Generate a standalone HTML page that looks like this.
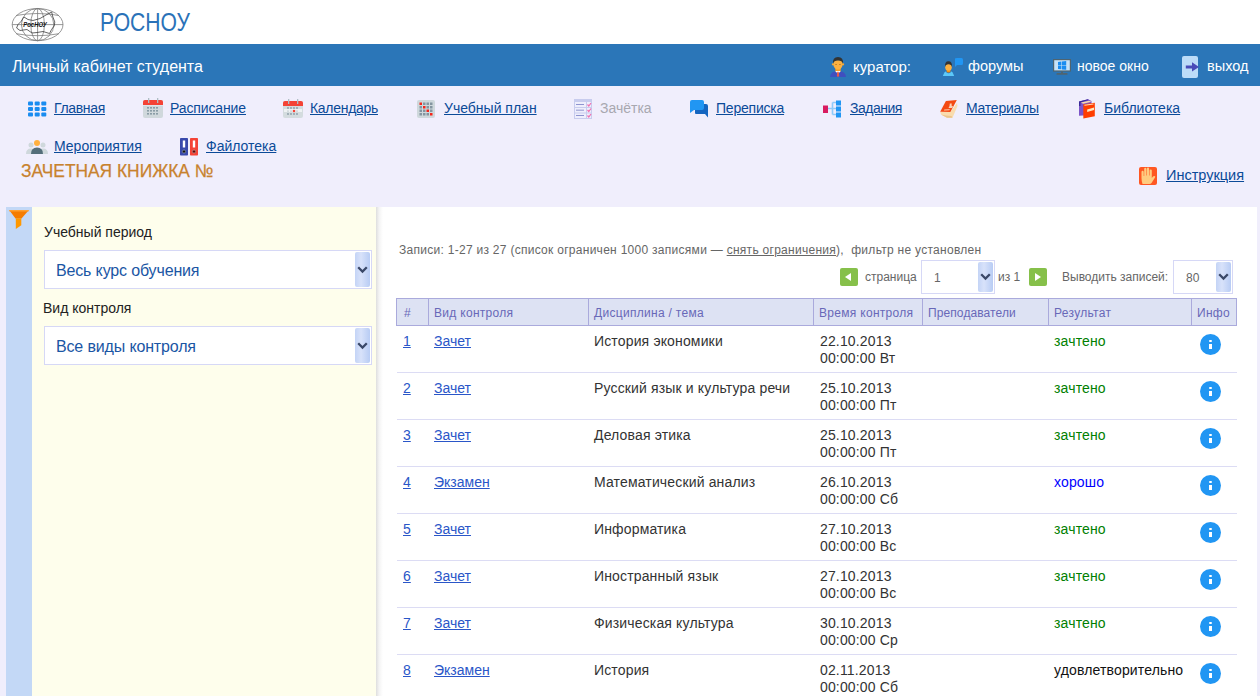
<!DOCTYPE html>
<html><head><meta charset="utf-8">
<style>
*{margin:0;padding:0;box-sizing:border-box}
html,body{width:1260px;height:696px;overflow:hidden;background:#fff;font-family:"Liberation Sans",sans-serif;position:relative}
.a{position:absolute;white-space:nowrap;line-height:1}
#top{position:absolute;left:0;top:0;width:1260px;height:44px;background:#fff}
#bar{position:absolute;left:0;top:44px;width:1260px;height:42px;background:#2b76b8}
#nav{position:absolute;left:0;top:86px;width:1260px;height:610px;background:#f0eefc}
.nl{color:#0b4a98;text-decoration:underline;font-size:14px}
.wt{color:#fff;font-size:15px}
svg{position:absolute;overflow:visible}
#strip{position:absolute;left:6px;top:207px;width:26px;height:489px;background:#c3d8f6}
#yel{position:absolute;left:32px;top:207px;width:344px;height:489px;background:#fefeec}
#shadow{position:absolute;left:376px;top:207px;width:7px;height:489px;background:linear-gradient(to right,#dedede,#f4f4f4 45%,#fff)}
#wp{position:absolute;left:383px;top:207px;width:874px;height:489px;background:#fff}
.lbl{font-size:14px;color:#222}
.sel{position:absolute;background:#fff;border:1px solid #d6d8f6}
.sbtn{position:absolute;border-radius:2px;background:linear-gradient(to right,#c4d4f6,#d8e2fa 40%,#b8ccf4)}
.chev{position:absolute;width:7px;height:7px;border-right:3px solid #3a4868;border-bottom:3px solid #3a4868;transform:rotate(45deg)}
.stx{font-size:16px;color:#1a56a4}
.gt{color:#666;font-size:12px}
.th{position:absolute;top:298px;left:396px;width:841px;height:28px;background:#dde2f3;border:1px solid #aaaadc}
.vl{position:absolute;top:298px;width:1px;height:28px;background:#aaaadc}
.thc{font-size:12px;color:#6868b8}
.td{font-size:14px;color:#333;letter-spacing:0.15px}
.lk{color:#2a56c8;text-decoration:underline;font-size:14px}
.sep{position:absolute;left:397px;width:840px;height:1px;background:#dcdcf4}
.info{position:absolute;width:21px;height:21px;border-radius:50%;background:#2196f3}
.info:before{content:"";position:absolute;left:9.3px;top:9.7px;width:2.5px;height:5.8px;background:#fff}
.info:after{content:"";position:absolute;left:9.3px;top:5.8px;width:2.5px;height:2.3px;border-radius:1px;background:#fff}
.gbtn{position:absolute;width:18px;height:18px;border-radius:2px;background:#86c04a}
</style></head><body>
<div id="top"></div>
<div id="bar"></div>
<div id="nav"></div>

<!-- logo -->
<svg style="left:10px;top:6px" width="56" height="38" viewBox="10 6 56 38">
 <g fill="none" stroke="#777" stroke-width="0.75">
  <ellipse cx="37.6" cy="24.6" rx="25.4" ry="16.1"/>
  <ellipse cx="37.6" cy="24.6" rx="16.2" ry="16.1"/>
  <ellipse cx="37.6" cy="24.6" rx="6.8" ry="16.1"/>
  <line x1="37.6" y1="8.5" x2="37.6" y2="40.7"/>
  <line x1="12.2" y1="24.6" x2="63" y2="24.6"/>
  <path d="M16 15.5 Q37.6 11.5 59 15.5 M16 33.7 Q37.6 37.7 59 33.7"/>
 </g>
 <path d="M16.6 28 L18 24.5 L21 21.5 L24 17 L28 19.5 L33 20.5 L40 18.5 L46 15 L51.7 12 L52.5 16 L54.8 22 L54.2 26 L51.5 29.5 L49.5 33.5 L43 31.5 L37 32.5 L32 33 L27 29.5 L20 30.5 Z" fill="none" stroke="#333" stroke-width="0.75"/>
 <text x="23.3" y="26.6" font-family="Liberation Sans" font-style="italic" font-weight="bold" font-size="6.6" textLength="23.5" lengthAdjust="spacingAndGlyphs" fill="#111">РосНОУ</text>
</svg>
<div class="a" style="left:100px;top:10px;font-size:25px;color:#2a72b8;transform:scaleX(0.845);transform-origin:0 0">РОСНОУ</div>

<!-- blue bar -->
<div class="a" style="left:12px;top:59px;font-size:16px;color:#fff">Личный кабинет студента</div>

<svg style="left:829px;top:57px" width="18" height="20" viewBox="0 0 18 20">
 <path d="M1 20 Q1.3 14 9 14 Q16.7 14 17 20 Z" fill="#3f4fbf"/>
 <rect x="6.3" y="10" width="5.4" height="4.5" fill="#f7a020"/>
 <path d="M6.3 14 L9 17 L11.7 14 Z" fill="#fff"/>
 <path d="M8.3 14.8 L9.7 14.8 L10.2 19 L9 20 L7.8 19 Z" fill="#e85a48"/>
 <circle cx="3.9" cy="7.3" r="1.1" fill="#f8a830"/><circle cx="14.1" cy="7.3" r="1.1" fill="#f8a830"/>
 <ellipse cx="9" cy="7.3" rx="4.7" ry="5.3" fill="#fcb040"/>
 <path d="M4 6.8 Q3.4 0 9 0 Q14.6 0 14 6.8 Q13.2 3.6 9 3.6 Q4.8 3.6 4 6.8 Z" fill="#333"/>
 <rect x="6.3" y="7.2" width="1.6" height="0.8" fill="#b07020"/><rect x="10.1" y="7.2" width="1.6" height="0.8" fill="#b07020"/>
</svg>
<div class="a wt" style="left:853px;top:59px">куратор:</div>

<svg style="left:942px;top:58px" width="22" height="19" viewBox="0 0 22 19">
 <path d="M0.8 18 L2.5 14.2 Q3.5 13.2 5 13.2 L8 13.2 Q9.5 13.2 10.5 14.2 L12.2 18 Z" fill="#5cc8f8"/>
 <path d="M4 12.5 L9 12.5 L8.5 14.5 Q6.5 16 4.5 14.5 Z" fill="#1565c0"/>
 <path d="M4.5 11 L8.5 11 L8.3 14 Q6.5 15 4.7 14 Z" fill="#f59010"/>
 <ellipse cx="6.5" cy="9.3" rx="3.3" ry="3.5" fill="#fcb040"/>
 <path d="M3 9 Q2.6 3.2 6.5 3.2 Q10.4 3.2 10 9 Q9.5 6.3 6.5 6.2 Q3.5 6.3 3 9 Z" fill="#333"/>
 <path d="M13 0.5 Q13 0 15 0 L19.5 0 Q21 0 21 2 L21 5.5 Q21 7 19.5 7 L15 7 L13 9 Z" fill="#2196f3"/>
</svg>
<div class="a wt" style="left:968px;top:59px;font-size:14.5px">форумы</div>

<svg style="left:1053px;top:59px" width="18" height="16" viewBox="0 0 18 16">
 <rect x="0" y="0" width="18" height="12.6" fill="#4f6470"/>
 <rect x="1.2" y="1.2" width="15.6" height="10.2" fill="#c6e2f8"/>
 <path d="M5 3 L8.4 2.6 L8.4 6.2 L5 6.2 Z M9 2.5 L13.2 2 L13.2 6.2 L9 6.2 Z M5 6.8 L8.4 6.8 L8.4 10.3 L5 9.9 Z M9 6.8 L13.2 6.8 L13.2 10.8 L9 10.4 Z" fill="#1a8cf0"/>
 <rect x="8" y="12.6" width="2" height="1.6" fill="#4f6470"/>
 <rect x="3.5" y="14" width="11" height="1.8" rx="0.5" fill="#4f6470"/>
</svg>
<div class="a wt" style="left:1077px;top:59px;font-size:14px">новое окно</div>

<svg style="left:1182px;top:56px" width="18" height="22" viewBox="0 0 18 22">
 <rect x="0" y="0" width="16" height="22" rx="2" fill="#bcdcf8"/>
 <path d="M3.8 9.6 L10 9.6 L10 6.2 L17 11 L10 15.6 L10 12.4 L3.8 12.4 Z" fill="#4a4cb8"/>
</svg>
<div class="a wt" style="left:1207px;top:59px;font-size:14.5px">выход</div>

<!-- nav row 1 -->
<svg style="left:28px;top:101px" width="19" height="16" viewBox="0 0 19 16">
 <g fill="#1a8cf0">
 <rect x="0" y="0.5" width="5" height="4" rx="1"/><rect x="6.7" y="0.5" width="5" height="4" rx="1"/><rect x="13.3" y="0.5" width="5" height="4" rx="1"/>
 <rect x="0" y="6" width="5" height="4" rx="1"/><rect x="6.7" y="6" width="5" height="4" rx="1"/><rect x="13.3" y="6" width="5" height="4" rx="1"/>
 <rect x="0" y="11.5" width="5" height="4" rx="1"/><rect x="6.7" y="11.5" width="5" height="4" rx="1"/><rect x="13.3" y="11.5" width="5" height="4" rx="1"/>
 </g>
</svg>
<div class="a nl" style="left:54px;top:101px;letter-spacing:-0.33px">Главная</div>

<svg style="left:143px;top:98px" width="20" height="20" viewBox="0 0 20 20">
 <rect x="0" y="2" width="20" height="18" rx="2" fill="#d0d8dc"/>
 <path d="M0 4 Q0 2 2 2 L18 2 Q20 2 20 4 L20 7 L0 7 Z" fill="#f44336"/>
 <rect x="0" y="7" width="20" height="0.7" fill="#e0eef2"/>
 <g fill="#8a9ca6"><rect x="4" y="9" width="2" height="1.6"/><rect x="7" y="9" width="2" height="1.6"/><rect x="10" y="9" width="2" height="1.6"/><rect x="13" y="9" width="2" height="1.6"/>
 <rect x="4" y="12" width="2" height="1.6"/><rect x="7" y="12" width="2" height="1.6"/><rect x="10" y="12" width="2" height="1.6"/><rect x="13" y="12" width="2" height="1.6"/>
 <rect x="4" y="15" width="2" height="1.6"/><rect x="7" y="15" width="2" height="1.6"/><rect x="10" y="15" width="2" height="1.6"/><rect x="13" y="15" width="2" height="1.6"/></g>
 <rect x="5" y="0" width="1.3" height="5" fill="#b0bec5"/><rect x="14" y="0" width="1.3" height="5" fill="#b0bec5"/>
</svg>
<div class="a nl" style="left:170px;top:101px;letter-spacing:-0.12px">Расписание</div>

<svg style="left:283px;top:99px" width="20" height="20" viewBox="0 0 20 20">
 <rect x="0" y="2" width="20" height="17" rx="2" fill="#d4dcdf"/>
 <rect x="1" y="10" width="18" height="3" fill="#eef2f3"/>
 <path d="M0 4 Q0 2 2 2 L18 2 Q20 2 20 4 L20 7 L0 7 Z" fill="#f44336"/>
 <g fill="#8a9ca6"><circle cx="5" cy="9" r="0.9"/><circle cx="8" cy="9" r="0.9"/><circle cx="11" cy="9" r="0.9"/><circle cx="14" cy="9" r="0.9"/>
 <circle cx="5" cy="12" r="0.6"/><circle cx="8" cy="12" r="0.6"/><circle cx="14" cy="12" r="0.6"/>
 <circle cx="5" cy="15" r="0.9"/><circle cx="8" cy="15" r="0.9"/><circle cx="11" cy="15" r="0.9"/><circle cx="14" cy="15" r="0.9"/></g>
 <circle cx="11" cy="12" r="1.3" fill="#f44336"/>
 <rect x="5" y="0" width="1.3" height="5" fill="#b0bec5"/><rect x="14" y="0" width="1.3" height="5" fill="#b0bec5"/>
</svg>
<div class="a nl" style="left:310px;top:101px;letter-spacing:-0.3px">Календарь</div>

<svg style="left:417px;top:100px" width="18" height="18" viewBox="0 0 18 18">
 <rect x="0" y="0" width="18" height="18" rx="2" fill="#cfd8dc"/>
 <g fill="#8495a0">
 <rect x="6" y="2.5" width="2.5" height="2.5"/><rect x="9.5" y="2.5" width="2.5" height="2.5"/><rect x="13" y="2.5" width="2.5" height="2.5"/>
 <rect x="2.5" y="6" width="2.5" height="2.5"/><rect x="9.5" y="6" width="2.5" height="2.5"/><rect x="13" y="6" width="2.5" height="2.5"/>
 <rect x="2.5" y="9.5" width="2.5" height="2.5"/><rect x="6" y="9.5" width="2.5" height="2.5"/><rect x="13" y="9.5" width="2.5" height="2.5"/>
 <rect x="2.5" y="13" width="2.5" height="2.5"/><rect x="6" y="13" width="2.5" height="2.5"/><rect x="9.5" y="13" width="2.5" height="2.5"/>
 </g>
 <g fill="#f4241a"><rect x="2.5" y="2.5" width="2.5" height="2.5"/><rect x="6" y="6" width="2.5" height="2.5"/><rect x="9.5" y="9.5" width="2.5" height="2.5"/><rect x="13" y="13" width="2.5" height="2.5"/></g>
</svg>
<div class="a nl" style="left:444px;top:101px">Учебный план</div>

<svg style="left:574px;top:99px" width="18" height="20" viewBox="0 0 18 20">
 <rect x="0" y="0" width="18" height="20" fill="#c8ccee"/>
 <rect x="1" y="3" width="11" height="5" fill="#eeeefc"/><rect x="13" y="3" width="4" height="5" fill="#eeeefc"/>
 <rect x="1" y="9" width="11" height="4.5" fill="#eeeefc"/><rect x="13" y="9" width="4" height="4.5" fill="#eeeefc"/>
 <rect x="1" y="14.5" width="11" height="4.5" fill="#eeeefc"/><rect x="13" y="14.5" width="4" height="4.5" fill="#eeeefc"/>
 <rect x="2" y="5" width="8" height="1" fill="#8e94d0"/><rect x="2" y="10.5" width="8" height="1.5" fill="#aeb2dc"/><rect x="2" y="16" width="8" height="1" fill="#8e94d0"/>
 <g fill="none" stroke="#f070b0" stroke-width="1.2"><path d="M13.5 5.5 L14.8 7 L17 4"/><path d="M13.5 11 L14.8 12.5 L17 9.5"/><path d="M13.5 16.5 L14.8 18 L17 15"/></g>
</svg>
<div class="a" style="left:600px;top:101px;font-size:14px;color:#a8a8b0">Зачётка</div>

<svg style="left:690px;top:100px" width="19" height="18" viewBox="0 0 19 18">
 <path d="M5 4 Q5 5 5 6 L5 13 Q5 14 6 14 L15 14 L18 17.5 L18 6 Q18 4 16 4 Z" fill="#1565c0"/>
 <path d="M2 0 L12 0 Q14 0 14 2 L14 8 Q14 10 12 10 L4 10 L0 13 L0 2 Q0 0 2 0 Z" fill="#2196f3"/>
</svg>
<div class="a nl" style="left:716px;top:101px;letter-spacing:-0.22px">Переписка</div>

<svg style="left:823px;top:100px" width="18" height="18" viewBox="0 0 18 18">
 <rect x="0" y="5.5" width="5" height="7.5" fill="#d81b60"/>
 <path d="M5 8.5 L9.5 8.5 M9.5 2.5 L9.5 14.5 M9.5 2.5 L13 2.5 M9.5 14.5 L13 14.5 M9.5 8.5 L13 8.5" stroke="#90caf9" stroke-width="1.6" fill="none"/>
 <rect x="13" y="0.5" width="5" height="5" fill="#2196f3"/><rect x="13" y="6.5" width="5" height="5" fill="#2196f3"/><rect x="13" y="12.5" width="5" height="5" fill="#2196f3"/>
</svg>
<div class="a nl" style="left:850px;top:101px;letter-spacing:-0.5px">Задания</div>

<svg style="left:934px;top:96px" width="28" height="26" viewBox="934 96 28 26">
 <path d="M940.2 112 L941 114.5 L947 117.8 L952.5 117.8 L957.5 106 L957 103 L950.4 112 Z" fill="#f9dcae"/>
 <path d="M941 114.5 L947 117.8 L952.5 117.8 L951.5 116 L946 115.5 Z" fill="#ecc48a"/>
 <path d="M945.9 100.9 L956.8 100 L950.4 112 L940.2 111.7 Z" fill="#f44a12"/>
 <path d="M949.8 103.5 L951.8 103.5 L951.5 105.5 L953 106.5 L952.2 108 L948.5 108 L949.5 106 Z" fill="#fcd2b4"/>
 <path d="M944.3 109.5 L949.8 109.3 L949.5 110.3 L944 110.5 Z" fill="#fcd2b4"/>
</svg>
<div class="a nl" style="left:966px;top:101px;letter-spacing:-0.23px">Материалы</div>

<svg style="left:1072px;top:96px" width="28" height="26" viewBox="1072 96 28 26">
 <path d="M1079 101.5 L1088 99.2 L1091.5 101 L1091.5 115 L1079 115.8 Z" fill="#7c55c8"/>
 <path d="M1079 101.5 L1088 99.2 L1088.5 100 L1080.5 102.5 L1080.5 106 L1079 106 Z" fill="#3a2a98"/>
 <path d="M1081 102.5 L1089 100.8 L1091.5 101.8 L1083 103.8 Z" fill="#f8dcae"/>
 <path d="M1083.3 104.3 L1094.8 102.8 L1094.8 116.3 L1083.3 118.5 Z" fill="#ff3d00"/>
 <path d="M1084.3 104.8 L1093.5 103.5 L1093.5 104.5 L1084.5 105.8 Z" fill="#fcdcb8"/>
 <path d="M1087.2 109.5 L1094 107.6 L1094 110 L1087.2 112 Z" fill="#fde8c0"/>
</svg>
<div class="a nl" style="left:1104px;top:101px">Библиотека</div>

<!-- nav row 2 -->
<svg style="left:26px;top:140px" width="22" height="14" viewBox="0 0 22 14">
 <circle cx="5" cy="5" r="2.5" fill="#cfd8dc"/><circle cx="17" cy="5" r="2.5" fill="#cfd8dc"/>
 <path d="M0 14 Q0 8.5 5 8.5 Q10 8.5 10 14 Z M12 14 Q12 8.5 17 8.5 Q22 8.5 22 14 Z" fill="#cfd8dc"/>
 <circle cx="11" cy="3" r="3" fill="#ffb040"/>
 <path d="M5 14 Q5 7.5 11 7.5 Q17 7.5 17 14 Z" fill="#546e7a"/>
</svg>
<div class="a nl" style="left:54px;top:139px">Мероприятия</div>

<svg style="left:180px;top:138px" width="19" height="18" viewBox="0 0 19 18">
 <rect x="0" y="0" width="8" height="17.5" rx="0.8" fill="#3949ab"/>
 <rect x="10" y="0" width="8" height="17.5" rx="0.8" fill="#f44336"/>
 <rect x="2.8" y="2.5" width="2.4" height="7" fill="#fff"/><rect x="12.8" y="2.5" width="2.4" height="7" fill="#fff"/>
 <circle cx="4" cy="13.5" r="1.6" fill="#111" stroke="#9aa" stroke-width="0.6"/><circle cx="14" cy="13.5" r="1.6" fill="#600" stroke="#9aa" stroke-width="0.6"/>
</svg>
<div class="a nl" style="left:206px;top:139px">Файлотека</div>

<div class="a" style="left:21px;top:162px;font-size:18px;color:#c8822e;-webkit-text-stroke:0.25px #c8822e;transform:scaleX(0.965);transform-origin:0 0">ЗАЧЕТНАЯ КНИЖКА №</div>

<svg style="left:1139px;top:167px" width="18" height="18" viewBox="0 0 18 18">
 <rect x="0" y="0" width="18" height="18" rx="2" fill="#ff5722"/>
 <path d="M3.5 17 Q2.5 14 2.5 11 L2.5 5 Q2.5 3.8 3.6 3.8 Q4.7 3.8 4.7 5 L4.7 9 L5.2 9 L5.2 2 Q5.2 0.8 6.3 0.8 Q7.4 0.8 7.4 2 L7.4 8.5 L7.9 8.5 L7.9 1.5 Q7.9 0.5 9 0.5 Q10.1 0.5 10.1 1.5 L10.1 8.5 L10.6 8.5 L10.6 3.5 Q10.6 2.5 11.7 2.5 Q12.8 2.5 12.8 3.5 L12.8 11 L14 9.5 Q15 8.5 16 9.2 Q16.5 9.8 16 10.5 L12.5 16 Q11.8 17 10.5 17 Z" fill="#ffcc80"/>
</svg>
<div class="a nl" style="left:1166px;top:168px;font-size:14.5px">Инструкция</div>

<!-- content -->
<div id="strip"></div>
<svg style="left:9px;top:210px" width="20" height="19" viewBox="0 0 20 19">
 <path d="M0.5 0.5 L19.5 0.5 L12.5 8.5 L6.5 8.5 Z" fill="#f57c00"/>
 <rect x="0" y="0" width="20" height="1.6" rx="0.8" fill="#ffa030"/>
 <path d="M6.8 8.3 L12.3 8.3 L12.3 15.3 L6.8 19 Z" fill="#ff9800"/>
</svg>
<div id="yel"></div>
<div id="shadow"></div>
<div id="wp"></div>

<div class="a lbl" style="left:44px;top:225px">Учебный период</div>
<div class="sel" style="left:44px;top:250px;width:328px;height:39px"></div>
<div class="sbtn" style="left:355px;top:252px;width:15px;height:35px"></div>
<svg class="chv" style="left:357px;top:266px" width="11" height="8" viewBox="0 0 11 8"><path d="M1.2 1.2 L5.5 5.5 L9.8 1.2" fill="none" stroke="#3a4868" stroke-width="2.3"/></svg>
<div class="a stx" style="left:56px;top:263px;letter-spacing:-0.15px">Весь курс обучения</div>

<div class="a lbl" style="left:43px;top:301px">Вид контроля</div>
<div class="sel" style="left:44px;top:326px;width:328px;height:39px"></div>
<div class="sbtn" style="left:355px;top:328px;width:15px;height:35px"></div>
<svg class="chv" style="left:357px;top:342px" width="11" height="8" viewBox="0 0 11 8"><path d="M1.2 1.2 L5.5 5.5 L9.8 1.2" fill="none" stroke="#3a4868" stroke-width="2.3"/></svg>
<div class="a stx" style="left:56px;top:339px;letter-spacing:-0.15px">Все виды контроля</div>

<div class="a gt" style="left:399px;top:244px;letter-spacing:0.28px">Записи: 1-27 из 27 (список ограничен 1000 записями — <u>снять ограничения</u>), &nbsp;фильтр не установлен</div>

<div class="gbtn" style="left:840px;top:268px"></div>
<div class="a" style="left:845px;top:273px;width:0;height:0;border-top:4px solid transparent;border-bottom:4px solid transparent;border-right:6px solid #fff"></div>
<div class="a gt" style="left:865px;top:271px;font-size:12px">страница</div>
<div class="sel" style="left:921px;top:260px;width:74px;height:34px"></div>
<div class="sbtn" style="left:978px;top:262px;width:15px;height:30px"></div>
<svg class="chv" style="left:980px;top:273px" width="11" height="8" viewBox="0 0 11 8"><path d="M1.2 1.2 L5.5 5.5 L9.8 1.2" fill="none" stroke="#3a4868" stroke-width="2.3"/></svg>
<div class="a gt" style="left:934px;top:272px;font-size:12px">1</div>
<div class="a gt" style="left:998px;top:271px;font-size:12px">из 1</div>
<div class="gbtn" style="left:1029px;top:268px"></div>
<div class="a" style="left:1035px;top:273px;width:0;height:0;border-top:4px solid transparent;border-bottom:4px solid transparent;border-left:6px solid #fff"></div>
<div class="a gt" style="left:1062px;top:271px;font-size:12px">Выводить записей:</div>
<div class="sel" style="left:1173px;top:260px;width:60px;height:34px"></div>
<div class="sbtn" style="left:1216px;top:262px;width:15px;height:30px"></div>
<svg class="chv" style="left:1218px;top:273px" width="11" height="8" viewBox="0 0 11 8"><path d="M1.2 1.2 L5.5 5.5 L9.8 1.2" fill="none" stroke="#3a4868" stroke-width="2.3"/></svg>
<div class="a gt" style="left:1186px;top:272px;font-size:12px">80</div>

<div class="th"></div>
<div class="vl" style="left:428px"></div>
<div class="vl" style="left:588px"></div>
<div class="vl" style="left:813px"></div>
<div class="vl" style="left:922px"></div>
<div class="vl" style="left:1048px"></div>
<div class="vl" style="left:1191px"></div>
<div class="a thc" style="left:404px;top:307px">#</div>
<div class="a thc" style="left:434px;top:307px;letter-spacing:0.3px">Вид контроля</div>
<div class="a thc" style="left:594px;top:307px;letter-spacing:0.3px">Дисциплина / тема</div>
<div class="a thc" style="left:819px;top:307px;letter-spacing:0.3px">Время контроля</div>
<div class="a thc" style="left:928px;top:307px;letter-spacing:0.1px">Преподаватели</div>
<div class="a thc" style="left:1054px;top:307px;letter-spacing:0.3px">Результат</div>
<div class="a thc" style="left:1197px;top:307px;letter-spacing:0.3px">Инфо</div>

<div class="a lk" style="left:403px;top:334px">1</div>
<div class="a lk" style="left:434px;top:334px">Зачет</div>
<div class="a td" style="left:594px;top:334px">История экономики</div>
<div class="a td" style="left:820px;top:334px">22.10.2013</div>
<div class="a td" style="left:820px;top:351px">00:00:00 Вт</div>
<div class="a td" style="left:1054px;top:334px;color:#008000">зачтено</div>
<div class="info" style="left:1200px;top:334px"></div>
<div class="sep" style="top:372px"></div>
<div class="a lk" style="left:403px;top:381px">2</div>
<div class="a lk" style="left:434px;top:381px">Зачет</div>
<div class="a td" style="left:594px;top:381px">Русский язык и культура речи</div>
<div class="a td" style="left:820px;top:381px">25.10.2013</div>
<div class="a td" style="left:820px;top:398px">00:00:00 Пт</div>
<div class="a td" style="left:1054px;top:381px;color:#008000">зачтено</div>
<div class="info" style="left:1200px;top:381px"></div>
<div class="sep" style="top:419px"></div>
<div class="a lk" style="left:403px;top:428px">3</div>
<div class="a lk" style="left:434px;top:428px">Зачет</div>
<div class="a td" style="left:594px;top:428px">Деловая этика</div>
<div class="a td" style="left:820px;top:428px">25.10.2013</div>
<div class="a td" style="left:820px;top:445px">00:00:00 Пт</div>
<div class="a td" style="left:1054px;top:428px;color:#008000">зачтено</div>
<div class="info" style="left:1200px;top:428px"></div>
<div class="sep" style="top:466px"></div>
<div class="a lk" style="left:403px;top:475px">4</div>
<div class="a lk" style="left:434px;top:475px">Экзамен</div>
<div class="a td" style="left:594px;top:475px">Математический анализ</div>
<div class="a td" style="left:820px;top:475px">26.10.2013</div>
<div class="a td" style="left:820px;top:492px">00:00:00 Сб</div>
<div class="a td" style="left:1054px;top:475px;color:#0000ff">хорошо</div>
<div class="info" style="left:1200px;top:475px"></div>
<div class="sep" style="top:513px"></div>
<div class="a lk" style="left:403px;top:522px">5</div>
<div class="a lk" style="left:434px;top:522px">Зачет</div>
<div class="a td" style="left:594px;top:522px">Информатика</div>
<div class="a td" style="left:820px;top:522px">27.10.2013</div>
<div class="a td" style="left:820px;top:539px">00:00:00 Вс</div>
<div class="a td" style="left:1054px;top:522px;color:#008000">зачтено</div>
<div class="info" style="left:1200px;top:522px"></div>
<div class="sep" style="top:560px"></div>
<div class="a lk" style="left:403px;top:569px">6</div>
<div class="a lk" style="left:434px;top:569px">Зачет</div>
<div class="a td" style="left:594px;top:569px">Иностранный язык</div>
<div class="a td" style="left:820px;top:569px">27.10.2013</div>
<div class="a td" style="left:820px;top:586px">00:00:00 Вс</div>
<div class="a td" style="left:1054px;top:569px;color:#008000">зачтено</div>
<div class="info" style="left:1200px;top:569px"></div>
<div class="sep" style="top:607px"></div>
<div class="a lk" style="left:403px;top:616px">7</div>
<div class="a lk" style="left:434px;top:616px">Зачет</div>
<div class="a td" style="left:594px;top:616px">Физическая культура</div>
<div class="a td" style="left:820px;top:616px">30.10.2013</div>
<div class="a td" style="left:820px;top:633px">00:00:00 Ср</div>
<div class="a td" style="left:1054px;top:616px;color:#008000">зачтено</div>
<div class="info" style="left:1200px;top:616px"></div>
<div class="sep" style="top:654px"></div>
<div class="a lk" style="left:403px;top:663px">8</div>
<div class="a lk" style="left:434px;top:663px">Экзамен</div>
<div class="a td" style="left:594px;top:663px">История</div>
<div class="a td" style="left:820px;top:663px">02.11.2013</div>
<div class="a td" style="left:820px;top:680px">00:00:00 Сб</div>
<div class="a td" style="left:1054px;top:663px;color:#111">удовлетворительно</div>
<div class="info" style="left:1200px;top:663px"></div>
</body></html>
